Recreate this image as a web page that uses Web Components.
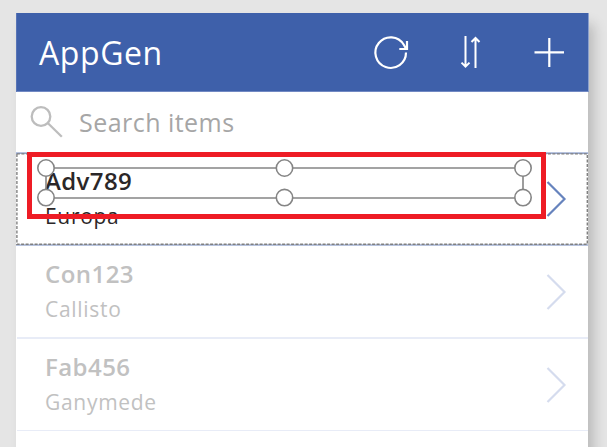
<!DOCTYPE html>
<html lang="en"><head><meta charset="utf-8"><title>AppGen</title>
<style>html,body{margin:0;height:100%;overflow:hidden}body{background:#e5e5e5;font-family:"Open Sans","Noto Sans",sans-serif}</style></head>
<body>
<app-screen>
  <app-header>AppGen</app-header>
  <search-box>Search items</search-box>
  <gallery-item selected><span slot="title" style="letter-spacing:.4px">Adv789</span><span slot="subtitle">Europa</span><selection-frame></selection-frame></gallery-item>
  <gallery-item><span slot="title">Con123</span><span slot="subtitle">Callisto</span></gallery-item>
  <gallery-item thin><span slot="title">Fab456</span><span slot="subtitle">Ganymede</span></gallery-item>
</app-screen>
<script>
function component(name, html) {
  customElements.define(name, class extends HTMLElement {
    constructor() { super(); this.attachShadow({mode:'open'}).innerHTML = html; }
  });
}
component('app-screen', `<style>
:host{display:block;box-sizing:border-box;padding:13px 19px 0 16px;height:447px;overflow:hidden}
main{display:flex;flex-direction:column;height:460px;background:#fff;box-shadow:7px 10px 12px -1px rgba(0,0,0,.19)}
</style><main><slot></slot></main>`);
component('app-header', `<style>
:host{display:flex;box-sizing:border-box;height:79px;flex:none;margin-right:-1px;padding-left:22px;background:#3e60aa;border-bottom:1px solid #7189c3;border-right:1px solid #8ba0cd;border-left:1px solid #5874b6;color:#fff;align-items:center;justify-content:space-between}
h1{margin:0;font-size:32px;line-height:44px;font-weight:400;letter-spacing:.6px;padding-top:2px}
svg{display:block;flex:none}
</style><h1><slot></slot></h1>
<svg width="221" height="78" viewBox="367 13 221 78" fill="none" stroke="#fff" stroke-width="2.2">
<path d="M406 52.5A15.3 15.3 0 1 1 403.8 44.7L406.2 49M407 41v8h-7.7"/>
<path d="M465.5 36v30.3M461.5 62.6l4 4 4-4M475.5 68V38.5M471.5 42l4-4 4 4" stroke-width="2"/>
<path d="M534.5 52.3H564M549.3 38v29"/></svg>`);
component('search-box', `<style>
:host{display:flex;height:60px;flex:none;color:#a6a6a6;font-size:25px;letter-spacing:.47px;line-height:61px}
svg{flex:none;margin-right:3px}
</style><svg width="60" height="61" viewBox="16 92 60 61" fill="none" stroke="#bdbdbd" stroke-width="2.3"><circle cx="41" cy="116.5" r="9.3"/><path d="M48 123.3 61.8 136.8"/></svg><span><slot></slot></span>`);
component('gallery-item', `<style>
:host{display:block;position:relative;box-sizing:border-box;height:93px;flex:none;color:#c1c1c1;--arrow:#d5dcee}
:host::after{content:"";position:absolute;left:1px;right:0;bottom:-1px;height:2px;background:#e8ecf7}
:host([thin])::after{bottom:0;height:1px}
.row{display:flex;justify-content:space-between;height:92px}
.text{padding:11px 0 0 29px}
.title{font-size:24px;font-weight:600;line-height:36px;letter-spacing:.45px}
.sub{font-size:21px;line-height:34px;letter-spacing:.7px}
:host([selected]){color:#2b2728;--arrow:#6683bd}
:host([selected])::after{content:none}
.edge{display:none}
:host([selected]) .edge{display:block;position:absolute;left:0;top:0;z-index:2}
</style><div class="row"><div class="text"><div class="title"><slot name="title"></slot></div><div class="sub"><slot name="subtitle"></slot></div></div>
<svg width="50" height="92" fill="none" stroke="var(--arrow)" stroke-width="2.2"><path d="M9.5 30 26.5 47 9.5 64"/></svg></div>
<svg class="edge" width="572" height="94" fill="none"><path d="M0 1.2H572M0 93H572" stroke="#7188bd" stroke-width="1.2"/><path d="M.9 1.9H571.3V92.3H.9Z" stroke="#808080" stroke-width="1.4" stroke-dasharray="3 1.5"/></svg><slot></slot>`);
component('selection-frame', `<style>
:host{position:absolute;left:11px;top:0;width:519px;height:67px;box-sizing:border-box;border:5px solid #ee1c25;z-index:3}
svg{position:absolute;left:-5px;top:-5px}
</style><svg width="519" height="67" viewBox="27 152 519 67" fill="none" stroke="#858585" stroke-width="1.6">
<path d="M46 168H523V198H46Z"/><g fill="#fff"><circle cx="46" cy="168" r="8.2"/><circle cx="284.5" cy="168" r="8.2"/><circle cx="523" cy="168" r="8.2"/><circle cx="46" cy="197.6" r="8.2"/><circle cx="284.5" cy="197.6" r="8.2"/><circle cx="523" cy="197.6" r="8.2"/></g></svg>`);
</script></body></html>
